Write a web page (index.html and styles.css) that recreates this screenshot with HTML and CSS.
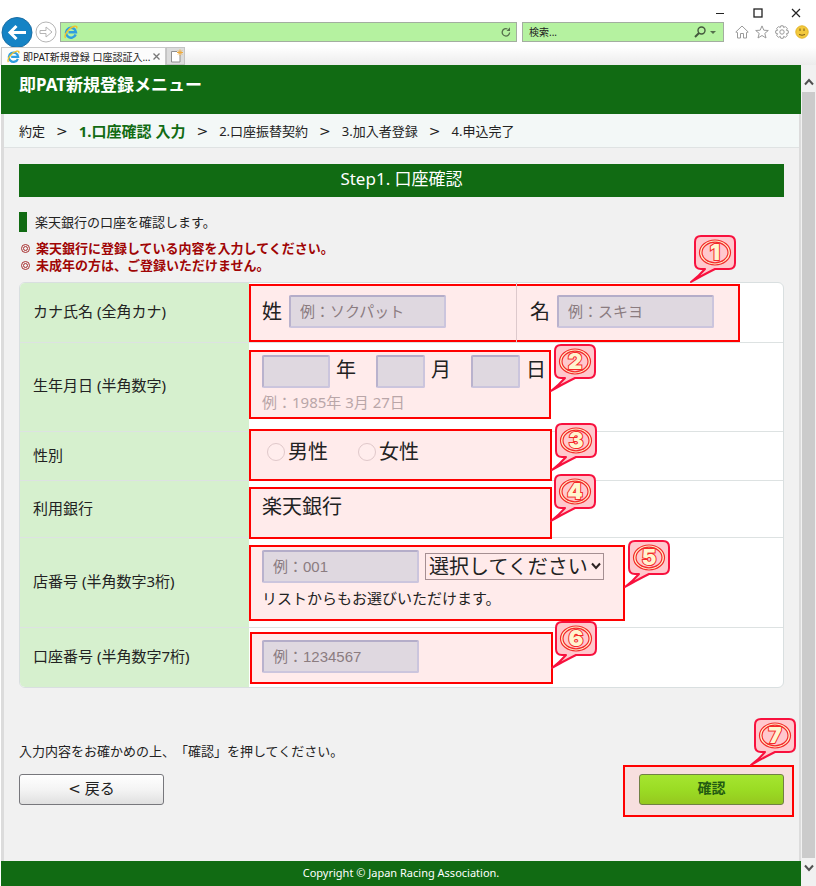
FILE: index.html
```html
<!DOCTYPE html>
<html lang="ja">
<head>
<meta charset="utf-8">
<title>即PAT新規登録 口座認証入力</title>
<link rel="stylesheet" href="styles.css">
</head>
<body>
<svg class="defs" width="0" height="0" aria-hidden="true">
  <symbol id="balloon" viewBox="0 0 48 50">
    <path d="M12 2H40Q46 2 46 8V29Q46 35 40 35H26Q12 42 2 48Q10 42 16 35H12Q6 35 6 29V8Q6 2 12 2Z" fill="#ffc8cd" stroke="#f8113e" stroke-width="2" stroke-linejoin="round"/>
    <ellipse cx="26" cy="18.500" rx="15.500" ry="12.500" fill="#fff5cf" stroke="#f42a2a" stroke-width="1.200"/>
    <ellipse cx="26" cy="18.500" rx="13" ry="10.300" fill="#ffc8cd" stroke="#f42a2a" stroke-width="1.200"/>
  </symbol>
  <symbol id="ie" viewBox="0 0 14 14">
    <path d="M11.700 9.500A5 5 0 1 1 12 7.300H4.500" fill="none" stroke="#2f9fe0" stroke-width="2.400"/>
    <path d="M1.500 13C-.500 10 5 2.500 10.500 1.300Q13.600 .700 12.600 3.500" fill="none" stroke="#f0c330" stroke-width="1.400"/>
  </symbol>
</svg>

<header class="browser">
  <div class="window-controls">
    <button aria-label="最小化"><svg width="10" height="10"><path d="M1 5.500H9" stroke="#222"/></svg></button>
    <button aria-label="最大化"><svg width="10" height="10"><rect x="1" y="1" width="8" height="8" fill="none" stroke="#222" stroke-width="1.300"/></svg></button>
    <button aria-label="閉じる"><svg width="10" height="10"><path d="M1 1L9 9M9 1L1 9" stroke="#222" stroke-width="1.200"/></svg></button>
  </div>
  <div class="toolbar">
    <button class="back" aria-label="前のページ"><svg width="32" height="30" viewBox="0 0 32 30"><circle cx="16" cy="15.500" r="15" fill="#1583c5" stroke="#1a6da4"/><path d="M25 15.500H9M15.500 9L9 15.500L15.500 22" fill="none" stroke="#fff" stroke-width="3"/></svg></button>
    <button class="forward" aria-label="次のページ"><svg width="22" height="22" viewBox="0 0 22 22"><circle cx="11" cy="11" r="10" fill="#fff" stroke="#b5b5b5"/><path d="M5 9.500H11V6L17 11L11 16V12.500H5Z" fill="none" stroke="#b5b5b5"/></svg></button>
    <div class="address">
      <svg width="14" height="14"><use href="#ie"/></svg>
      <input type="text" aria-label="アドレス">
      <button aria-label="更新"><svg width="10" height="10" viewBox="0 0 10 10"><path d="M8.600 5.500A3.700 3.700 0 1 1 6.500 2" fill="none" stroke="#55704c" stroke-width="1.300"/><path d="M5.500 4H9V.300Z" fill="#55704c"/></svg></button>
    </div>
    <div class="search">
      <input type="text" aria-label="検索" placeholder="検索...">
      <svg width="24" height="12" viewBox="0 0 24 12"><circle cx="7.500" cy="4.500" r="3.500" fill="none" stroke="#44583d" stroke-width="1.400"/><path d="M5 7L1 11" stroke="#44583d" stroke-width="2"/><path d="M16 5H22L19 8Z" fill="#55704c"/></svg>
    </div>
    <div class="tools">
      <svg width="14" height="14" viewBox="0 0 14 14"><path d="M.800 7L7 1L13.200 7L11.500 7.500V13H8.500V8.500H5.500V13H2.500V7.500Z" fill="#fff" stroke="#9a9a9a"/></svg>
      <svg width="14" height="14" viewBox="0 0 14 14"><path d="M7 .900L8.800 5.200L13.300 5.500L9.800 8.400L11 13L7 10.500L3 13L4.200 8.400L.700 5.500L5.200 5.200Z" fill="#fff" stroke="#9a9a9a"/></svg>
      <svg width="14" height="14" viewBox="0 0 14 14"><path d="M5.800 .800H8.200L8.600 2.500L10.400 1.600L12.300 3.500L11.400 5.300L13.300 5.800V8.200L11.400 8.700L12.300 10.500L10.400 12.300L8.600 11.400L8.200 13.300H5.800L5.300 11.400L3.500 12.300L1.600 10.500L2.600 8.700L.700 8.200V5.800L2.600 5.300L1.600 3.500L3.500 1.600L5.300 2.500Z" fill="#fff" stroke="#9a9a9a"/><circle cx="7" cy="7" r="2.200" fill="none" stroke="#9a9a9a"/></svg>
      <svg width="14" height="14" viewBox="0 0 14 14"><circle cx="7" cy="7" r="6.200" fill="#f3c93c" stroke="#e3b52c"/><path d="M5 3.500V6M9 3.500V6M4 9.500Q7 11 10 9.500" fill="none" stroke="#7a5a16" stroke-width="1"/></svg>
    </div>
  </div>
  <div class="tabs">
    <div class="tab">
      <svg width="13" height="13"><use href="#ie"/></svg>
      <span>即PAT新規登録 口座認証入...</span>
      <button aria-label="タブを閉じる"><svg width="7" height="7"><path d="M.500 .500L6.500 6.500M6.500 .500L.500 6.500" stroke="#777" stroke-width="1.300"/></svg></button>
    </div>
    <button class="new-tab" aria-label="新しいタブ"><svg width="14" height="14" viewBox="0 0 14 14"><path d="M8 2.500H2.500V13H11V6" fill="#fff" stroke="#8f8f8f"/><path d="M11 .500V6.500M8 3.500H14M9 1.500L13 5.500M13 1.500L9 5.500" stroke="#eeaa3c"/></svg></button>
  </div>
</header>

<div class="viewport">
  <div class="page">
    <div class="site-header"><h1>即PAT新規登録メニュー</h1></div>
    <div class="body">
      <ol class="steps">
        <li>約定</li>
        <li class="sep">&gt;</li>
        <li class="current">1.口座確認 入力</li>
        <li class="sep">&gt;</li>
        <li>2.口座振替契約</li>
        <li class="sep">&gt;</li>
        <li>3.加入者登録</li>
        <li class="sep">&gt;</li>
        <li>4.申込完了</li>
      </ol>
      <main>
        <h2>Step1. 口座確認</h2>
        <p class="lead">楽天銀行の口座を確認します。</p>
        <ul class="notes">
          <li>楽天銀行に登録している内容を入力してください。</li>
          <li>未成年の方は、ご登録いただけません。</li>
        </ul>
        <form>
          <div class="card">
            <div class="row name">
              <div class="label">カナ氏名 (全角カナ)</div>
              <div class="value">
                <div class="mark mark1"><svg class="callout"><use href="#balloon"/><text x="26" y="26">1</text></svg></div>
                <div class="part"><label for="sei">姓</label><input id="sei" type="text" placeholder="例：ソクパット"></div>
                <div class="part"><label for="mei">名</label><input id="mei" type="text" placeholder="例：スキヨ"></div>
              </div>
            </div>
            <div class="row birth">
              <div class="label">生年月日 (半角数字)</div>
              <div class="value">
                <div class="mark mark2"><svg class="callout"><use href="#balloon"/><text x="26" y="26">2</text></svg></div>
                <div class="line">
                  <input id="y" class="year" type="text"><label for="y">年</label>
                  <input id="m" class="short" type="text"><label for="m">月</label>
                  <input id="d" class="short" type="text"><label for="d">日</label>
                </div>
                <p class="example">例：1985年 3月 27日</p>
              </div>
            </div>
            <div class="row sex">
              <div class="label">性別</div>
              <div class="value">
                <div class="mark mark3"><svg class="callout"><use href="#balloon"/><text x="26" y="26">3</text></svg></div>
                <div class="line">
                  <label><input type="radio" name="sex">男性</label>
                  <label><input type="radio" name="sex">女性</label>
                </div>
              </div>
            </div>
            <div class="row bank">
              <div class="label">利用銀行</div>
              <div class="value">
                <div class="mark mark4"><svg class="callout"><use href="#balloon"/><text x="26" y="26">4</text></svg></div>
                <div class="line">楽天銀行</div>
              </div>
            </div>
            <div class="row branch">
              <label class="label" for="branch">店番号 (半角数字3桁)</label>
              <div class="value">
                <div class="mark mark5"><svg class="callout"><use href="#balloon"/><text x="26" y="26">5</text></svg></div>
                <div class="line">
                  <input id="branch" type="text" placeholder="例：001">
                  <div class="select">
                    <select aria-label="店番号リスト"><option>選択してください</option></select>
                    <svg width="10" height="8"><path d="M1 1.500L5 6L9 1.500" fill="none" stroke="#2c2222" stroke-width="2"/></svg>
                  </div>
                </div>
                <p class="help">リストからもお選びいただけます。</p>
              </div>
            </div>
            <div class="row account">
              <label class="label" for="account">口座番号 (半角数字7桁)</label>
              <div class="value">
                <div class="mark mark6"><svg class="callout"><use href="#balloon"/><text x="26" y="26">6</text></svg></div>
                <div class="line"><input id="account" type="text" placeholder="例：1234567"></div>
              </div>
            </div>
          </div>
          <p class="confirm-text">入力内容をお確かめの上、「確認」を押してください。</p>
          <div class="actions">
            <button type="button" class="btn"><span class="angle">&lt;</span> 戻る</button>
            <div class="confirm">
              <div class="mark mark7"><svg class="callout"><use href="#balloon"/><text x="26" y="26">7</text></svg></div>
              <button type="button" class="btn primary">確認</button>
            </div>
          </div>
        </form>
      </main>
    </div>
    <footer>Copyright © Japan Racing Association.</footer>
  </div>
  <div class="scrollbar" aria-hidden="true">
    <svg width="10" height="8"><path d="M1 6.500L5 2L9 6.500" fill="none" stroke="#505050" stroke-width="2"/></svg>
    <div class="thumb"></div>
    <svg width="10" height="8"><path d="M1 1.500L5 6L9 1.500" fill="none" stroke="#505050" stroke-width="2"/></svg>
  </div>
</div>
</body>
</html>
```
FILE: styles.css
```css
*, *::before { box-sizing: border-box; margin: 0; padding: 0; }

body {
  display: flex;
  flex-direction: column;
  min-height: 100vh;
  background: #fff;
  color: #222;
  font-family: "Noto Sans", "Noto Sans CJK JP", sans-serif;
  font-size: 13px;
  line-height: 18px;
  text-spacing-trim: space-all;
}

ul, ol { list-style: none; }
button, input, select { font: inherit; color: inherit; }
svg { display: block; flex: none; }
.defs { position: absolute; }

/* Browser frame */
.browser button { display: flex; background: none; border: 0; }
.window-controls {
  display: flex;
  justify-content: flex-end;
  gap: 28px;
  height: 17px;
  padding: 8px 15px 0 0;
}
.toolbar {
  display: flex;
  align-items: center;
  height: 30px;
  padding: 0 7px 0 1px;
}
.forward { margin: 0 3px 0 2px; }
.address, .search {
  display: flex;
  align-items: center;
  height: 20px;
  padding: 0 5px 0 3px;
  background: #b5f2a0;
  border: 1px solid #a3aea0;
  font-size: 10px;
}
.address { flex: 1; }
.search { width: 202px; margin: 0 11px 0 5px; }
.address input, .search input {
  flex: 1;
  min-width: 0;
  height: 16px;
  padding-left: 3px;
  background: none;
  border: 0;
}
.search input::placeholder { color: #222; }
.tools { display: flex; gap: 6px; }
.tabs {
  display: flex;
  height: 18px;
  padding-left: 1px;
  background: linear-gradient(#fff, #ececec);
}
.tab {
  display: flex;
  align-items: center;
  gap: 3px;
  width: 165px;
  padding: 0 5px;
  background: #fcfcfc;
  border: 1px solid #c9c9c9;
  border-bottom: 0;
  font-size: 10px;
  white-space: nowrap;
}
.tab span { flex: 1; }
.browser .new-tab {
  width: 19px;
  justify-content: center;
  align-items: center;
  background: #dcdcdc;
  border: 1px solid #c4c4c4;
}

/* Page frame */
.viewport { display: flex; flex: 1; }
.page { display: flex; flex: 1; flex-direction: column; padding-left: 1px; }
.site-header { height: 49px; padding: 8px 18px; background: #116b13; color: #fff; }
h1 { font-size: 17px; line-height: 24px; }
.body {
  flex: 1;
  background: #f1f1f1;
  border: solid #dcdcdc;
  border-width: 0 2px 0 3px;
}
.steps {
  display: flex;
  align-items: center;
  gap: 11px;
  height: 34px;
  padding-left: 15px;
  background: #f3f8f7;
  border-bottom: 1px solid #dfe3e3;
}
.steps .current { color: #116b13; font-size: 15px; font-weight: bold; }
.sep, .angle { font-family: "DejaVu Sans", sans-serif; }
.sep { font-size: 14px; }
main { padding: 16px 15px 0; }
h2 {
  height: 33px;
  background: #116b13;
  color: #fff;
  font-size: 17px;
  font-weight: normal;
  line-height: 30px;
  text-align: center;
}
.lead {
  margin-top: 15px;
  padding-left: 8px;
  border-left: 8px solid #116b13;
  line-height: 20px;
}
.notes { margin: 8px 0 8px; color: #a00505; font-weight: bold; line-height: 17px; }
.notes li { display: flex; align-items: center; gap: 6px; }
.notes li::before {
  content: "";
  width: 9px;
  height: 9px;
  margin-left: 2px;
  border: 3px double #a83030;
  border-radius: 50%;
}

/* Form table */
.card {
  background: #fff;
  border: 1px solid #d9dfe0;
  border-radius: 6px;
}
.row { display: grid; grid-template-columns: 229px 1fr; }
.row + .row { border-top: 1px solid #dde2e2; }
.label {
  display: flex;
  align-items: center;
  padding: 0 0 4px 13px;
  background: #d6f0ce;
  font-size: 15px;
}
.row:first-child .label { border-top-left-radius: 5px; }
.row:last-child .label { border-bottom-left-radius: 5px; }
.value {
  position: relative;
  padding: 12px 13px 0;
  font-size: 20px;
  line-height: 28px;
}
.line, .part, .example, .help, .confirm .btn { position: relative; z-index: 1; }
.line, .part { display: flex; align-items: center; }
.value input[type="text"] {
  width: 157px;
  height: 33px;
  padding: 0 9px;
  background: #dfd8e0;
  border: 2px solid #cbc5dd;
  border-top-color: #b4adc9;
  border-left-color: #b9b2cd;
  border-radius: 2px;
  font-family: "Liberation Sans", "Noto Sans CJK JP", sans-serif;
  font-size: 15px;
}
.value input::placeholder { color: #8b7c80; }

.name { height: 59px; }
.name .value { display: flex; padding: 0; }
.part { width: 267px; padding: 0 0 2px 13px; gap: 7px; }
.part + .part { border-left: 1px solid #ddc9cc; }
.birth { height: 89px; }
.birth .line label { margin: 0 20px 4px 6px; }
.value input.year { width: 68px; }
.value input.short { width: 49px; }
.example { color: #b9a6a8; font-size: 15px; line-height: 28px; }
.sex { height: 49px; }
.sex .value { padding-top: 6px; }
.sex .line { gap: 30px; padding-left: 5px; }
.sex label { display: flex; align-items: center; gap: 3px; }
.sex .label, .bank .label { padding-bottom: 2px; }
input[type="radio"] {
  appearance: none;
  width: 18px;
  height: 18px;
  background: #ffeded;
  border: 1px solid #e0c8ca;
  border-radius: 50%;
}
.bank { height: 57px; }
.branch { height: 90px; }
.branch .line { gap: 6px; }
.select { position: relative; }
select {
  display: block;
  appearance: none;
  width: 179px;
  height: 27px;
  padding-left: 3px;
  background: #ffeaea;
  border: 1px solid #a58f92;
  line-height: 24px;
}
.select svg { position: absolute; right: 3px; top: 9px; pointer-events: none; }
.help { font-size: 15px; line-height: 30px; }
.account { height: 60px; }

/* Numbered highlights over the form */
.mark {
  position: absolute;
  width: 303px;
  height: 52px;
  background: #ffebeb;
  border: 2px solid #ff0000;
}
.mark1 { left: 0; top: 1px; width: 491px; height: 58px; }
.mark2 { left: 0; top: 7px; width: 302px; height: 69px; }
.mark3 { left: 0; top: -3px; }
.mark4 { left: 0; top: 6px; }
.mark5 { left: 0; top: 7px; width: 376px; height: 76px; }
.mark6 { left: 1px; top: 4px; }
.mark7 { inset: -9px -10px -12px -16px; width: auto; height: auto; background: #f7dfdf; }
.callout {
  position: absolute;
  z-index: 3;
  left: 100%;
  top: -9px;
  width: 48px;
  height: 50px;
}
.callout text {
  fill: #fff5cf;
  stroke: #f42a2a;
  stroke-width: 2px;
  paint-order: stroke;
  font: 900 22px Inter, sans-serif;
  text-anchor: middle;
}
.mark1 .callout { left: 438px; top: -52px; }
.mark4 .callout { left: 298px; top: -16px; }
.mark5 .callout { top: -8px; }
.mark6 .callout { left: 298px; top: -14px; }
.mark7 .callout { left: 124px; top: -50px; }

/* Actions */
.confirm-text { margin-top: 53px; line-height: 20px; }
.actions { display: flex; justify-content: space-between; margin: 13px 0 56px; }
.confirm { position: relative; }
.btn {
  display: block;
  width: 145px;
  height: 31px;
  padding-bottom: 3px;
  background: linear-gradient(#fff, #f4f4f4 50%, #e0e0e0);
  border: 1px solid #77777c;
  border-radius: 3px;
  font-size: 15px;
}
.primary {
  background: linear-gradient(#a5e530, #9bdc24 50%, #95c81f);
  border-color: #718044;
  color: #235a12;
  font-size: 14px;
  font-weight: bold;
}
footer {
  height: 25px;
  background: #116b13;
  color: #fff;
  font-size: 11px;
  line-height: 23px;
  text-align: center;
}

.scrollbar {
  display: flex;
  flex-direction: column;
  align-items: center;
  gap: 6px;
  width: 15px;
  padding: 13px 1px 14px;
  background: #f1f1f1;
}
.thumb { flex: 1; align-self: stretch; background: #cbcbcb; }
```
